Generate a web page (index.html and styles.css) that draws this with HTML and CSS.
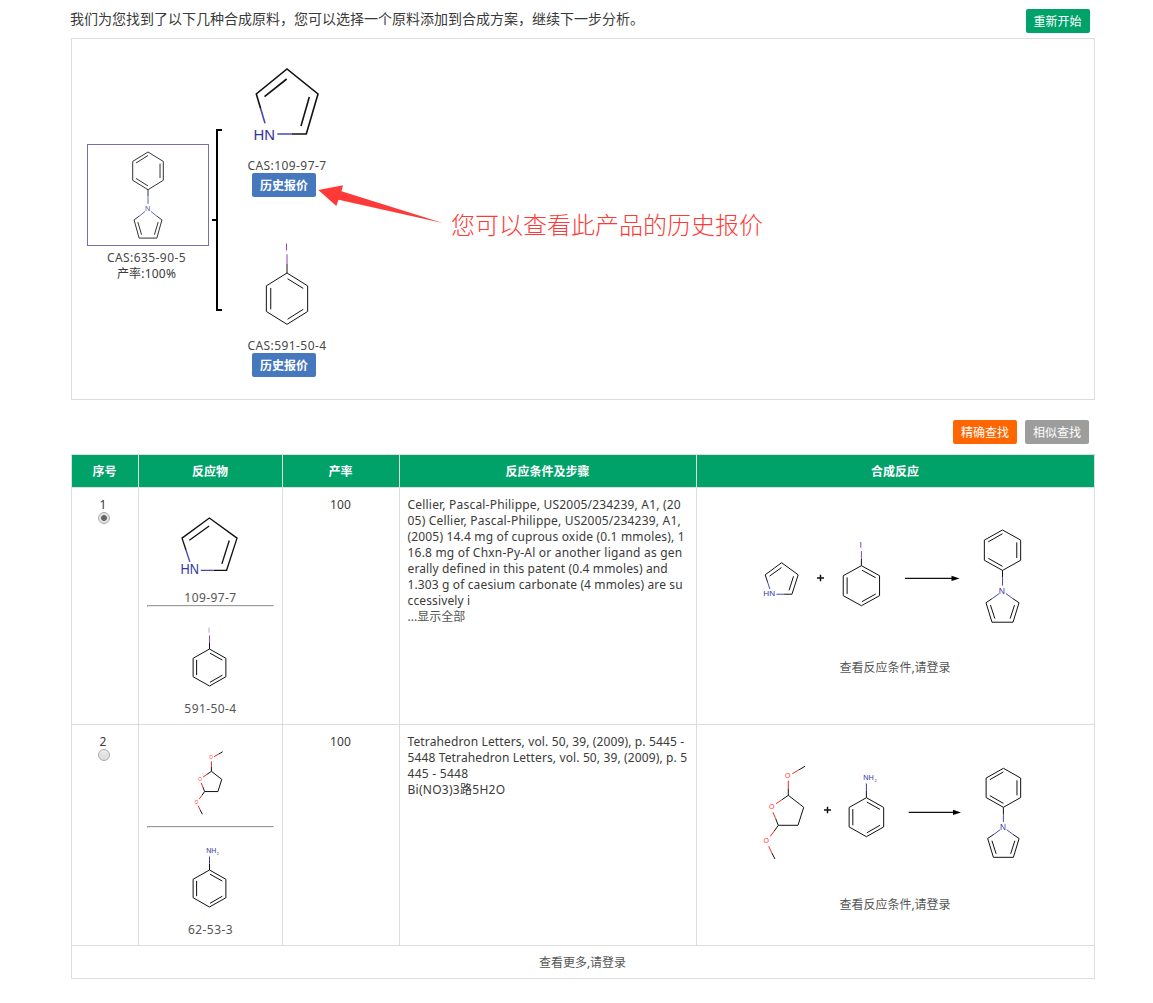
FILE: index.html
```
<!DOCTYPE html>
<html lang="zh-CN">
<head>
<meta charset="utf-8">
<title>合成原料分析</title>
<link rel="stylesheet" href="styles.css">
</head>
<body>
<svg class="shapes" width="0" height="0" aria-hidden="true">
  <defs>
    <!-- five-membered N ring, origin at the top atom -->
    <g id="pyrrole" class="bond">
      <path d="M-26.3 39.7L-30.7 25L0 0L31 25L19.3 65H4.7M-22.5 27.7L-.3 10M22.3 28L14 57"/>
      <path class="blue" d="M-26.3 39.7L-22 54.3M4.7 65H-9.7"/>
    </g>
    <!-- benzene ring with a substituent bond in the current colour -->
    <g id="phenyl" class="bond">
      <path d="M0 -7V0L17.8 10V30L0 40L-17.8 30V10L0 0M.5 4.5L14 12M-14 11.7V28.3M14 28.3L.5 36"/>
      <path class="tint" d="M0 -14.6V-7"/>
    </g>
    <g id="product" class="bond">
      <path d="M0 47V40L17.8 30V10L0 0L-17.8 10V30L0 40M-14 11.7L0 3.7M14 12.3V27.7M0 36L-14 28"/>
      <path d="M9.8 67.7L16.2 72L10.3 91.3H-10.3L-16.2 72L-9.8 67.7M-11.8 74.3L-7.5 87.7M11.8 74.3L7.5 87.7"/>
      <path class="blue" d="M0 47V55M3.4 63L9.8 67.7M-3.4 63L-9.8 67.7"/>
      <text class="n" x="-.5" y="63" font-size="8.5" text-anchor="middle">N</text>
    </g>
    <g id="furan" class="bond">
      <path d="M10.4 -25.3L16.7 -29M0 -7V0L15.4 12L9.7 30H-10L-12.6 23.4M-6.3 4.4L0 0M-10 30L-14 35.7M-16.6 57.4L-13.3 63.7"/>
      <path class="red" d="M4 -21.6L10.4 -25.3M0 -14.6V-7M-12.3 8.4L-6.3 4.4M-15.3 17L-12.6 23.4M-14 35.7L-18 41M-19.6 51L-16.6 57.4"/>
      <g class="o" font-size="7" text-anchor="middle">
        <text x="-.6" y="-17.5">O</text><text x="-16.6" y="13.9">O</text><text x="-22" y="47.9">O</text>
      </g>
    </g>
  </defs>
</svg>

<main class="page">
  <header class="intro">
    <p>我们为您找到了以下几种合成原料，您可以选择一个原料添加到合成方案，继续下一步分析。</p>
    <a class="btn green">重新开始</a>
  </header>

  <section class="panel">
    <div class="target">
      <div class="frame">
        <svg width="120" height="100" viewBox="88 145 120 100"><use href="#product" class="soft" transform="translate(148 152) scale(.86 .943)"/></svg>
      </div>
      <p><span class="cas">CAS:635-90-5</span></p>
      <p><span class="rate">产率:100%</span></p>
    </div>
    <div class="bracket"></div>
    <div class="sources">
      <div class="source">
        <svg width="90" height="100" viewBox="242 58 90 100">
          <use href="#pyrrole" class="heavy" transform="translate(287 69)"/>
          <text class="n" x="253.6" y="139.5" font-size="15.5" textLength="21.5" lengthAdjust="spacingAndGlyphs">HN</text>
        </svg>
        <p><span class="cas">CAS:109-97-7</span></p>
        <a class="btn blue-btn">历史报价</a>
      </div>
      <div class="source">
        <svg width="90" height="100" viewBox="242 238 90 100">
          <use href="#phenyl" class="iodo" transform="translate(287 273) scale(1.16 1.283)"/>
          <path class="iodine" d="M286.5 243.5V250.5"/>
        </svg>
        <p><span class="cas">CAS:591-50-4</span></p>
        <a class="btn blue-btn">历史报价</a>
      </div>
    </div>
    <div class="note">
      <svg width="125" height="24" viewBox="318 184 125 24"><path d="M318.3 190L343 185.2L341.5 191.2L442.8 222.9L338.5 199.7L336.3 206Z" fill="#fd3a38" /></svg>
      <span>您可以查看此产品的历史报价</span>
    </div>
  </section>

  <div class="actions"><a class="btn orange">精确查找</a><a class="btn gray">相似查找</a></div>

  <table class="results">
    <colgroup><col class="c1"><col class="c2"><col class="c3"><col class="c4"><col class="c5"></colgroup>
    <thead><tr><th>序号</th><th>反应物</th><th>产率</th><th>反应条件及步骤</th><th>合成反应</th></tr></thead>
    <tbody>
      <tr class="first">
        <td class="num">1<i class="radio on"></i></td>
        <td class="reactants">
          <svg width="127" height="94" viewBox="147 496 127 94">
            <use href="#pyrrole" class="mid" transform="translate(209.4 518) scale(.891 .805)"/>
            <text class="n" x="180.6" y="573.6" font-size="14" textLength="18.4" lengthAdjust="spacingAndGlyphs">HN</text>
          </svg>
          <p>109-97-7</p>
          <hr>
          <svg width="127" height="94" viewBox="147 607 127 94">
            <use href="#phenyl" class="iodo" transform="translate(209.5 649) scale(.92 .925)"/>
            <path class="iodine pale" d="M209 627.5V632.7"/>
          </svg>
          <p>591-50-4</p>
        </td>
        <td class="yield">100</td>
        <td class="steps"><span class="l1">Cellier, Pascal-Philippe, US2005/234239, A1, (20</span><br><span class="l1">05) Cellier, Pascal-Philippe, US2005/234239, A1,</span><br><span class="l2">(2005) 14.4 mg of cuprous oxide (0.1 mmoles), 1</span><br><span class="l1">16.8 mg of Chxn-Py-Al or another ligand as gen</span><br><span class="l3">erally defined in this patent (0.4 mmoles) and</span><br><span class="l3">1.303 g of caesium carbonate (4 mmoles) are su</span><br><span class="l3">ccessively i</span><br><a>...显示全部</a></td>
        <td class="scheme">
          <svg width="381" height="164" viewBox="705 496 381 164">
            <use href="#pyrrole" transform="translate(781.6 562.7) scale(.535 .485)"/>
            <text class="n" x="763.3" y="596" font-size="8" textLength="11.8" lengthAdjust="spacingAndGlyphs">HN</text>
            <path class="plus" d="M817 578H824M820.5 574.8V581.2"/>
            <use href="#phenyl" class="iodo" transform="translate(861.4 565.7) scale(1.02 1)"/>
            <path class="iodine" d="M860.8 542V547.7"/>
            <path class="line" d="M905 578.4H953"/><path d="M951.5 575.7L959.6 578.4L951.5 581.1Z"/>
            <use href="#product" transform="translate(1002.5 530) scale(1.02 1.01)"/>
          </svg>
          <a>查看反应条件,请登录</a>
        </td>
      </tr>
      <tr class="second">
        <td class="num">2<i class="radio"></i></td>
        <td class="reactants">
          <svg width="127" height="93" viewBox="147 733 127 93"><use href="#furan" transform="translate(211.4 771.3) scale(.675)"/></svg>
          <hr>
          <svg width="127" height="94" viewBox="147 828 127 94">
            <use href="#phenyl" class="amine" transform="translate(209.5 870) scale(.92 .925)"/>
            <text class="n" x="206.3" y="853.4" font-size="7">NH<tspan font-size="4" dx=".3" dy="1.4">2</tspan></text>
          </svg>
          <p>62-53-3</p>
        </td>
        <td class="yield">100</td>
        <td class="steps"><span class="l3">Tetrahedron Letters, vol. 50, 39, (2009), p. 5445 -</span><br><span class="l3">5448 Tetrahedron Letters, vol. 50, 39, (2009), p. 5</span><br><span class="l4">445 - 5448</span><br><span class="l4">Bi(NO3)3路5H2O</span></td>
        <td class="scheme">
          <svg width="381" height="164" viewBox="705 733 381 164">
            <use href="#furan" transform="translate(788.3 795.3)"/>
            <path class="plus" d="M824 810H831M827.5 806.8V813.2"/>
            <use href="#phenyl" class="amine" transform="translate(866.4 797.7) scale(.97 .975)"/>
            <text class="n" x="863.3" y="780.3" font-size="7.3">NH<tspan font-size="4" dx=".6" dy="1.6">2</tspan></text>
            <path class="line" d="M908.7 812.4H954"/><path d="M953 809.7L961 812.4L953 815.1Z"/>
            <use href="#product" transform="translate(1003.4 768.3) scale(.97 .975)"/>
          </svg>
          <a>查看反应条件,请登录</a>
        </td>
      </tr>
      <tr class="more"><td colspan="5"><a>查看更多,请登录</a></td></tr>
    </tbody>
  </table>
</main>
</body>
</html>
```
FILE: styles.css
```
* { box-sizing: border-box; }
body {
  margin: 0;
  background: #fff;
  color: #3a3a3a;
  font: 12px/16px "Noto Sans", "Noto Sans CJK SC", sans-serif;
}
p { margin: 0; }
svg { display: block; }
.shapes { position: absolute; }
.page { width: 1024px; margin-left: 71px; }

.intro {
  display: flex;
  justify-content: space-between;
  align-items: flex-start;
  height: 38px;
  padding: 9px 5px 0 0;
}
.intro p { font-size: 14px; line-height: 20px; margin-left: -1px; }
.btn {
  display: block;
  width: 64px;
  height: 24px;
  border-radius: 2px;
  color: #fff;
  line-height: 26px;
  text-align: center;
}
.green { padding-right: 1px; background: #00a26a; }
.orange { background: #ff6600; }
.gray { background: #9d9d9d; }
.blue-btn { background: #4678be; font-weight: bold; }

.panel {
  position: relative;
  display: flex;
  height: 362px;
  border: 1px solid #ddd;
}
.target { width: 122px; margin: 105px 0 0 15px; text-align: center; }
.frame { height: 102px; margin-bottom: 4px; border: 1px solid #7b6cb0; }
.target p { width: 119px; }
.bracket {
  position: relative;
  width: 6px;
  height: 182px;
  margin: 90px 0 0 7px;
  border: 2px solid #000;
  border-right: 0;
}
.bracket::before {
  content: "";
  position: absolute;
  left: -6px;
  top: 88px;
  width: 4px;
  height: 2px;
  background: #000;
}
.sources { margin: 19px 0 0 20px; }
.source { width: 90px; height: 180px; text-align: center; }
.source p { height: 15px; }
.source .btn { margin-left: 10px; }
.cas { color: #484848; }
.cas, .reactants p { letter-spacing: .42px; }
.rate { letter-spacing: .2px; }
.note {
  position: absolute;
  left: 246px;
  top: 145px;
  display: flex;
  color: #fd3a38;
  font: 300 24px/30px "Noto Sans CJK SC", sans-serif;
}
.note svg { width: 125px; overflow: visible; }
.note span { margin: 25px 0 0 8px; white-space: nowrap; }

.actions {
  display: flex;
  justify-content: flex-end;
  gap: 8px;
  padding: 20px 6px 10px 0;
}

.results {
  width: 1024px;
  table-layout: fixed;
  border-collapse: separate;
  border-spacing: 0;
  border: solid #ddd;
  border-width: 1px 0 0 1px;
}
.c1 { width: 67px; }
.c2 { width: 144px; }
.c3 { width: 117px; }
.c4 { width: 297px; }
.c5 { width: 398px; }
.results th, .results td {
  border: solid #ddd;
  border-width: 0 1px 1px 0;
  padding: 8px 8px 7px;
  text-align: center;
  vertical-align: top;
}
.results th { height: 33px; padding: 9px 9px 7px 8px; background: #00a26a; color: #fff; }
.first { height: 237px; }
.second { height: 221px; }
.more { height: 33px; }
.results .more td { padding: 9px 9px 7px 8px; }
.results .num { padding-top: 9px; padding-right: 12px; }
.results .yield { padding-top: 9px; padding-right: 9px; letter-spacing: .2px; }
.results .scheme { padding-right: 9px; }
.results .steps {
  padding: 9px 0 7px 7.5px;
  text-align: left;
  white-space: nowrap;
}
.l1 { letter-spacing: .2px; }
.l2 { letter-spacing: .17px; }
.l3 { letter-spacing: .13px; }
.l4 { letter-spacing: .27px; }
.results a { color: #555; }
.reactants p { color: #555; height: 15px; }
.reactants p:last-child { height: 16px; }
.reactants hr {
  height: 2px;
  margin: 0;
  border: 1px solid;
  border-color: #9a9a9a #eee #eee #9a9a9a;
}
.radio {
  display: block;
  width: 12px;
  height: 12px;
  margin: -1px 0 0 18px;
  border: 1px solid #aaa;
  border-radius: 50%;
  background: linear-gradient(#ececec, #dcdcdc);
}
.radio.on { background: radial-gradient(circle, #666 0 2.6px, #e4e4e4 3.3px); }

.bond path {
  fill: none;
  stroke: #111;
  stroke-width: var(--w, 1);
  vector-effect: non-scaling-stroke;
}
.bond .blue { stroke: #4848b8; }
.bond .red { stroke: #f22; }
.bond .tint { stroke: currentColor; }
.bond .o { fill: #f33; }
.heavy { --w: 1.6; }
.mid { --w: 1.35; }
.soft { opacity: .85; }
.iodo { color: #9440b8; }
.amine { color: #3c3cb0; }
.iodine { stroke: #9440b8; stroke-width: 1; }
.iodine.pale { stroke: #d9c4e8; stroke-width: 1.6; }
.plus { stroke: #111; stroke-width: 1.5; }
.line { stroke: #111; stroke-width: 1.1; }
svg text { font-family: "Liberation Sans", Arial, sans-serif; }
.n { fill: #3535a0; }
```
